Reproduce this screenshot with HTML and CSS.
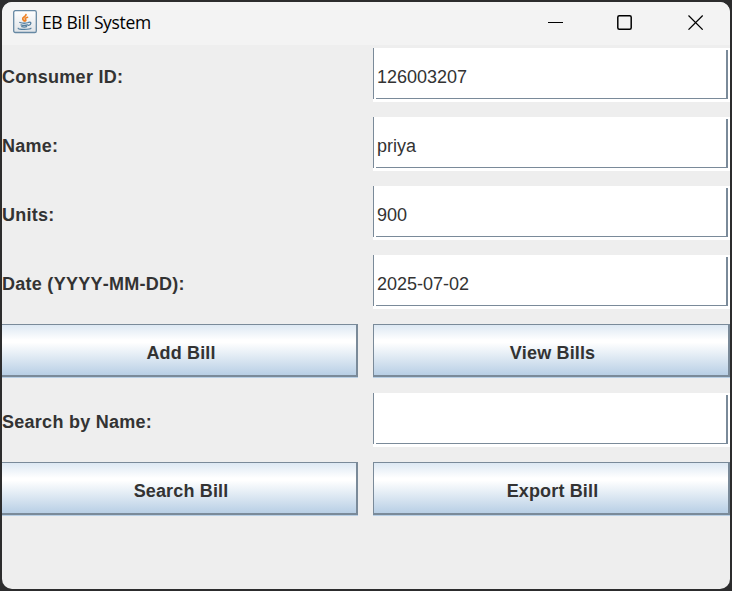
FILE: index.html
```
<!DOCTYPE html>
<html lang="en">
<head>
<meta charset="utf-8">
<title>EB Bill System</title>
<link rel="stylesheet" href="styles.css">
</head>
<body>
<main class="window">
  <header class="titlebar">
    <svg class="app-icon" width="24" height="24" viewBox="0 0 24 24">
      <defs><linearGradient id="tile" x2="0" y2="1"><stop stop-color="#fff"/><stop offset="1" stop-color="#dfe3e7"/></linearGradient></defs>
      <rect x=".7" y=".7" width="22.6" height="21.8" rx="1.600" fill="url(#tile)" stroke="#6688a3" stroke-width="1.3"/>
      <g fill="none" stroke-linecap="round">
        <path d="M13 4.500c.4 2-3.700 2.500-3.300 4.500.1 1 1.200 1.300 1.500 2M14.500 7.300c-2.600 1-2.800 1.500-1.800 2.300.3.5.1.900-.3 1.300" stroke="#ee8124" stroke-width="1.700"/>
        <path d="M6.800 12.500c2 .7 6.700.7 8.700 0M8 14.900c2 .6 4.900.6 6.700 0M8.700 16.700c1.700.5 3.600.5 5 0M15.800 12.300c3-.8 2.600 2.400-.2 3" stroke="#557f9f" stroke-width="1.300"/>
        <path d="M5.200 18.200c-.5 1.500 12 1.500 12.800 0" stroke="#557f9f" stroke-width="1.200"/>
      </g>
    </svg>
    <h1 class="title">EB Bill System</h1>
    <div class="controls">
      <svg class="control" width="16" height="16" viewBox="0 0 16 16"><path d="M0 8.500h15" shape-rendering="crispEdges" stroke-width="1"/></svg>
      <svg class="control maximize" width="16" height="16" viewBox="0 0 16 16"><rect x=".8" y="1.800" width="13.400" height="13.400" rx="1.500"/></svg>
      <svg class="control" width="16" height="16" viewBox="0 0 16 16"><path d="M.5 1.500l14.200 14.200M14.700 1.500L.5 15.700"/></svg>
    </div>
  </header>
  <form class="form">
    <label class="label" for="consumer">Consumer ID:</label>
    <div class="field"><input class="input" id="consumer" value="126003207"></div>
    <label class="label" for="name">Name:</label>
    <div class="field"><input class="input" id="name" value="priya"></div>
    <label class="label" for="units">Units:</label>
    <div class="field"><input class="input" id="units" value="900"></div>
    <label class="label" for="date">Date (YYYY-MM-DD):</label>
    <div class="field"><input class="input" id="date" value="2025-07-02"></div>
    <button class="button button-left" type="button">Add Bill</button>
    <button class="button" type="button">View Bills</button>
    <label class="label" for="search">Search by Name:</label>
    <div class="field"><input class="input" id="search"></div>
    <button class="button button-left" type="button">Search Bill</button>
    <button class="button" type="button">Export Bill</button>
  </form>
</main>
</body>
</html>
```
FILE: styles.css
```
* { box-sizing: border-box; }

body {
  margin: 0;
  height: 591px;
  padding: 2px;
  overflow: hidden;
  background: #2c2c2d;
  font-family: "Liberation Sans", Arial, sans-serif;
}

.window {
  height: 587px;
  overflow: hidden;
  border-radius: 10px;
  background: #eee;
}

.titlebar {
  display: flex;
  align-items: flex-start;
  height: 43px;
  padding-left: 11px;
  background: #f3f3f3;
}

.app-icon { margin-top: 8px; }

.title {
  margin: 7px 0 0 5px;
  font: 400 17.500px/26px "Open Sans", "Noto Sans", sans-serif;
  letter-spacing: -0.35px;
  color: #000;
  white-space: nowrap;
}

.controls {
  display: flex;
  gap: 55px;
  margin: 12px 26px 0 auto;
}

.control {
  fill: none;
  stroke: #000;
  stroke-width: 1.2;
}

.control:first-child { margin-right: -2px; }
.maximize { stroke-width: 1.5; }

.form {
  display: grid;
  grid-template-columns: 356px 357px;
  grid-auto-rows: 54px;
  gap: 15px;
  padding-top: 3px;
}

.label {
  padding-top: 3px;
  font-size: 18px;
  font-weight: 700;
  line-height: 52px;
  letter-spacing: 0.27px;
  font-kerning: none;
  color: #333;
}

.field {
  padding: 0 2px 3px 0;
  background: linear-gradient(#7a8a99, #7a8a99) 0 0 / 1px 51px no-repeat, #fff;
}

.input {
  display: block;
  width: 352px;
  height: 51px;
  margin-left: 3px;
  padding: 9px 0 0 1px;
  border: 0;
  border-bottom: 1px solid #7a8a99;
  border-radius: 0;
  background: linear-gradient(#7a8a99, #7a8a99) 100% 2px / 2px 49px no-repeat;
  font: 18px/41px "Liberation Sans", Arial, sans-serif;
  color: #333;
  outline: 0;
}

.button {
  height: 53px;
  padding: 6px 0 0 3px;
  border: solid #7a8a99;
  border-width: 1px 2px 2px 1px;
  border-radius: 0;
  background: linear-gradient(#dde8f3 0%, #fff 30%, #fff 35%, #b8cfe5 100%);
  box-shadow: 0 1px #b8cfe5;
  font: 700 18px/44px "Liberation Sans", Arial, sans-serif;
  letter-spacing: 0.15px;
  font-kerning: none;
  color: #333;
}

.button-left {
  padding-left: 4px;
  border-left: 0;
}
```
